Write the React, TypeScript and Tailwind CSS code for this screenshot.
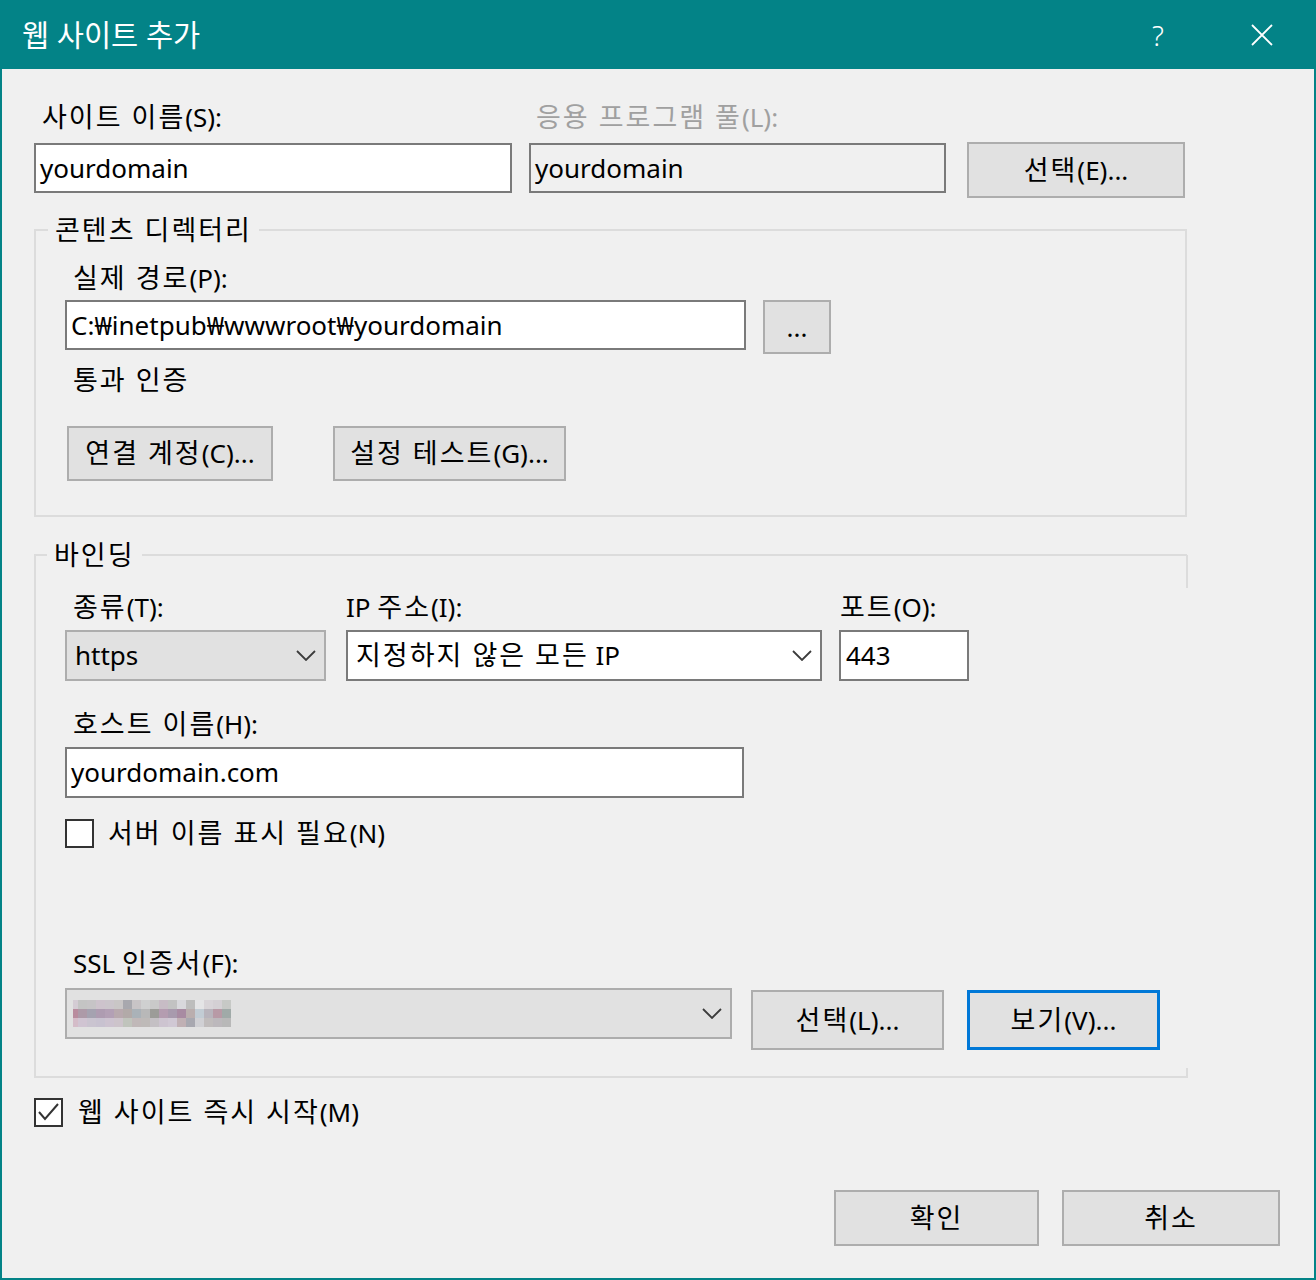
import type { ReactNode } from "react";

// pixelated (blurred-out) certificate name
const mosaic = [
  ["#d4ccd4", "#c4c4c4", "#c6c4c6", "#cdc3cc", "#cbc5cb", "#c9c6c6", "#a8a8ae", "#c8c4c6", "#cfd0d0", "#c9c9c9", "#c7bcc5", "#c2c2c2", "#d8d8dc", "#bdbdbd", "#e4e4e6", "#d8d4d8", "#d4d0d4", "#c7c9c6"],
  ["#b98c9e", "#ad9aa8", "#a5a2b0", "#ae9cb1", "#b3a0b5", "#b8a9ae", "#b2aaa8", "#aab2b8", "#b8b8b8", "#9c9c98", "#b49cb0", "#a89aad", "#a88ba2", "#baaeae", "#c2ccd4", "#b8b4bc", "#b89aa6", "#a0aaa8"],
  ["#d4bcc8", "#d0c4d2", "#cac4d0", "#c8c2d0", "#cdc3d0", "#cdc4cb", "#c0c4bc", "#c0b8b8", "#bebab8", "#c4c0c4", "#cdc4d0", "#d0c8d4", "#c0b0b4", "#a8a8b0", "#d0d0d4", "#c0bcbc", "#bcb8bc", "#b8b8b8"],
];

// hangul runs get a bit more room, like Malgun Gothic
function k(text: ReactNode): ReactNode {
  if (typeof text !== "string") return text;
  const parts = text.split(/([\uAC00-\uD7A3]+(?: [\uAC00-\uD7A3]+)*)/);
  return (
    <span>
      {parts.map((p, i) =>
        i % 2 === 1 ? (
          <span key={i} className="text-[27px] tracking-[2px]">
            {p}
          </span>
        ) : (
          p
        )
      )}
    </span>
  );
}

function Label({ children, className = "" }: { children: ReactNode; className?: string }) {
  return <div className={`h-[36px] leading-[36px] whitespace-nowrap ${className}`}>{k(children)}</div>;
}

function TextBox({ value, className = "", bg = "bg-white" }: { value: string; className?: string; bg?: string }) {
  return (
    <div className={`flex items-center border-2 border-[#7a7a7a] pl-[4px] whitespace-nowrap ${bg} ${className}`}>
      {value}
    </div>
  );
}

function Button({ children, className = "", focused = false }: { children: ReactNode; className?: string; focused?: boolean }) {
  return (
    <button
      className={`flex items-center justify-center bg-[#e1e1e1] whitespace-nowrap ${
        focused ? "border-[3px] border-[#0078d7]" : "border-2 border-[#adadad]"
      } ${className}`}
    >
      {k(children)}
    </button>
  );
}

function Chevron() {
  return (
    <svg width="20" height="11" viewBox="0 0 20 11" className="shrink-0">
      <polyline points="1,1 10,10 19,1" fill="none" stroke="#3c3c3c" strokeWidth="1.8" />
    </svg>
  );
}

function Combo({ children, className = "", white = false }: { children: ReactNode; className?: string; white?: boolean }) {
  return (
    <div
      className={`flex items-center justify-between pl-[8px] pr-[8px] border-2 whitespace-nowrap ${
        white ? "bg-white border-[#7a7a7a]" : "bg-[#e1e1e1] border-[#adadad]"
      } ${className}`}
    >
      <div className="flex items-center">{k(children)}</div>
      <Chevron />
    </div>
  );
}

function CheckBox({ checked = false }: { checked?: boolean }) {
  return (
    <div className="w-[29px] h-[29px] border-2 border-[#333333] bg-white shrink-0 flex items-center justify-center">
      {checked && (
        <svg width="25" height="25" viewBox="0 0 25 25">
          <polyline points="3,12 9,19 22,4" fill="none" stroke="#333333" strokeWidth="2" />
        </svg>
      )}
    </div>
  );
}

export default function App() {
  return (
    <div className="w-[1316px] h-[1280px] flex flex-col bg-[#f0f0f0] border-x-2 border-b-2 border-[#038387] text-[26px] text-black font-['Noto_Sans','Noto_Sans_CJK_KR',sans-serif]">
      {/* title bar */}
      <div className="h-[69px] shrink-0 flex items-center bg-[#038387] text-white">
        <div className="pl-[20px] text-[29.5px] leading-none">웹 사이트 추가</div>
        <div className="ml-auto flex h-full">
          <div className="w-[104px] flex items-center justify-center text-[28px] font-light">?</div>
          <div className="w-[104px] flex items-center justify-center">
            <svg width="22" height="22" viewBox="0 0 22 22">
              <path d="M1 1 L21 21 M21 1 L1 21" stroke="white" strokeWidth="1.8" />
            </svg>
          </div>
        </div>
      </div>

      <div className="flex flex-col pl-[32px] pr-[34px]">
        {/* site name / app pool */}
        <div className="flex items-start mt-[30px]">
          <div className="w-[478px]">
            <Label className="ml-2">사이트 이름(S):</Label>
            <TextBox value="yourdomain" className="mt-[8px] h-[50px]" />
          </div>
          <div className="w-[417px] ml-[17px]">
            <Label className="ml-[7px] text-[#a0a0a0]">응용 프로그램 풀(L):</Label>
            <TextBox value="yourdomain" bg="bg-[#f0f0f0]" className="mt-[8px] h-[50px]" />
          </div>
          <Button className="ml-[21px] mt-[43px] w-[218px] h-[56px]">선택(E)...</Button>
        </div>

        {/* content directory */}
        <fieldset className="w-[1153px] mt-[14px] border-2 border-[#dcdcdc] pb-[34px]">
          <legend className="ml-[12px] px-[7px] h-[36px] leading-[36px]">{k("콘텐츠 디렉터리")}</legend>
          <div className="pl-[29px]">
            <Label className="ml-2 mt-[12px]">실제 경로(P):</Label>
            <div className="flex items-start mt-[4px]">
              <TextBox value="C:₩inetpub₩wwwroot₩yourdomain" className="w-[681px] h-[50px]" />
              <Button className="ml-[17px] w-[68px] h-[54px]">...</Button>
            </div>
            <Label className="ml-2 mt-[8px]">통과 인증</Label>
            <div className="flex mt-[28px]">
              <Button className="ml-[2px] w-[206px] h-[55px]">연결 계정(C)...</Button>
              <Button className="ml-[60px] w-[233px] h-[55px]">설정 테스트(G)...</Button>
            </div>
          </div>
        </fieldset>

        {/* bindings */}
        <fieldset className="relative w-[1153px] mt-[20px] border-2 border-r-0 border-[#dcdcdc] pb-[26px]">
          <legend className="ml-[11px] px-[7px] h-[36px] leading-[36px]">{k("바인딩")}</legend>
          <div className="absolute right-[-1px] top-[-18px] w-[2px] h-[33px] bg-[#dcdcdc]" />
          <div className="absolute right-[-1px] bottom-[-2px] w-[2px] h-[10px] bg-[#dcdcdc]" />
          <div className="pl-[29px]">
            <div className="flex items-start mt-[16px]">
              <div className="w-[261px]">
                <Label className="ml-2">종류(T):</Label>
                <Combo className="mt-[5px] h-[51px]">https</Combo>
              </div>
              <div className="w-[476px] ml-[20px]">
                <Label>IP 주소(I):</Label>
                <Combo white className="mt-[5px] h-[51px]">지정하지 않은 모든 IP</Combo>
              </div>
              <div className="w-[130px] ml-[17px]">
                <Label className="ml-[1px]">포트(O):</Label>
                <TextBox value="443" className="mt-[5px] h-[51px] pl-[5px]" />
              </div>
            </div>
            <Label className="ml-2 mt-[25px]">호스트 이름(H):</Label>
            <TextBox value="yourdomain.com" className="mt-[5px] w-[679px] h-[51px]" />
            <div className="flex items-center h-[29px] mt-[21px]">
              <CheckBox />
              <span className="ml-[14px] whitespace-nowrap">{k("서버 이름 표시 필요(N)")}</span>
            </div>
            <Label className="ml-2 mt-[97px]">SSL 인증서(F):</Label>
            <div className="flex items-start mt-[7px]">
              <Combo className="w-[667px] h-[51px]">
                <svg width="158" height="29" viewBox="0 0 158 29" className="ml-[-2px] blur-[0.5px]">
                  {mosaic.map((row, r) =>
                    row.map((c, i) => (
                      <rect
                        key={`${r}-${i}`}
                        x={i === 0 ? 0 : 5 + (i - 1) * 9}
                        y={r * 9 + 1}
                        width={i === 0 ? 5 : 9}
                        height="9"
                        fill={c}
                      />
                    ))
                  )}
                </svg>
              </Combo>
              <Button className="ml-[19px] mt-[2px] w-[193px] h-[60px]">선택(L)...</Button>
              <Button focused className="ml-[23px] mt-[2px] w-[193px] h-[60px]">보기(V)...</Button>
            </div>
          </div>
        </fieldset>

        <div className="flex items-center h-[29px] mt-[20px]">
          <CheckBox checked />
          <span className="ml-[15px] whitespace-nowrap">{k("웹 사이트 즉시 시작(M)")}</span>
        </div>

        <div className="flex justify-end mt-[63px]">
          <Button className="w-[205px] h-[56px]">확인</Button>
          <Button className="ml-[23px] w-[218px] h-[56px]">취소</Button>
        </div>
      </div>
    </div>
  );
}
